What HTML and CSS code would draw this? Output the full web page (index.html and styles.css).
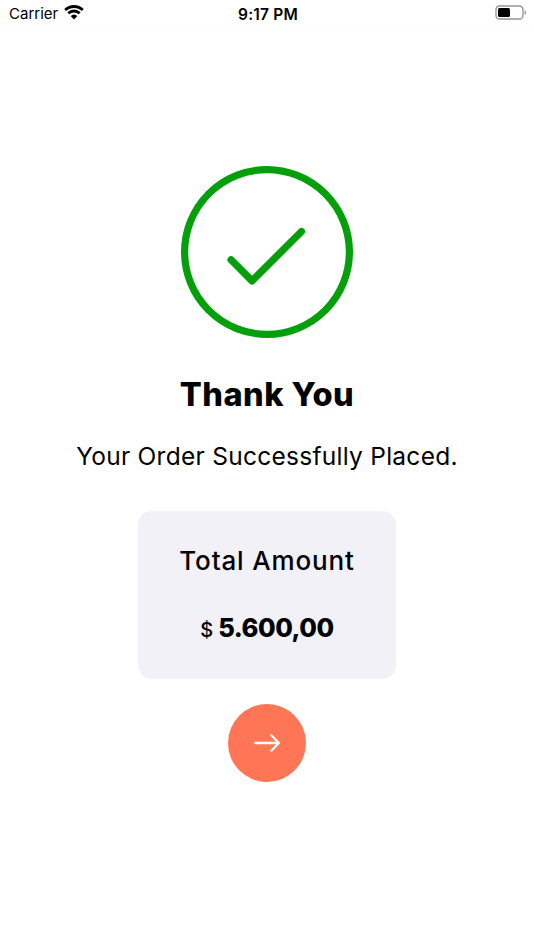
FILE: index.html
```
<!DOCTYPE html>
<html lang="en">
<head>
    <meta charset="UTF-8">
    <meta name="viewport" content="width=device-width, initial-scale=1.0">
    <title>Thank You</title>
    <link rel="stylesheet" href="styles.css">
</head>
<body>
    <header class="status-bar">
        <div class="carrier">
            <span>Carrier</span>
            <svg class="wifi" width="20" height="15" viewBox="0 0 20 15">
                <path d="M1.2 5.1a12.6 12.6 0 0 1 17.6 0M4.3 8.3a8.2 8.2 0 0 1 11.4 0" fill="none" stroke="#000" stroke-width="2.8"/>
                <path d="M6.7 11a4.8 4.8 0 0 1 6.6 0L10 14.4z"/>
            </svg>
        </div>
        <div class="time">9:17 PM</div>
        <svg class="battery" width="32" height="16" viewBox="0 0 32 16">
            <rect x="1" y="1" width="27" height="13" rx="3.6" fill="none" stroke="#969696" stroke-width="1.4"/>
            <rect x="3" y="3" width="12" height="9" rx="1.6"/>
            <path d="M29.6 5.2c2.2.9 2.2 3.7 0 4.6z" fill="#969696"/>
        </svg>
    </header>

    <main class="success">
        <svg class="check" width="172" height="172" viewBox="0 0 172 172" fill="none" stroke="#049f0b" stroke-width="7.2">
            <circle cx="86" cy="86" r="82.4"/>
            <path d="M50 93.7l21 21.2 49.5-49.4" stroke-linecap="round" stroke-linejoin="round"/>
        </svg>
        <h1>Thank You</h1>
        <p class="message">Your Order Successfully Placed.</p>
        <section class="total">
            <h2>Total Amount</h2>
            <p class="amount"><span class="currency">$</span><strong>5.600,00</strong></p>
        </section>
        <button class="next" type="button" aria-label="Continue">
            <svg width="28" height="20" viewBox="0 0 28 20" fill="none" stroke="#fff" stroke-width="2.3" stroke-linecap="round" stroke-linejoin="round">
                <path d="M2.2 10h23.6M18.3 2.3L25.8 10l-7.5 7.7"/>
            </svg>
        </button>
    </main>
</body>
</html>
```
FILE: styles.css
```
* {
    box-sizing: border-box;
}

body {
    margin: 0;
    height: 950px;
    background: #fff;
    color: #000;
    font-family: Inter, "Liberation Sans", sans-serif;
}

h1, h2, p {
    margin: 0;
    white-space: nowrap;
}

.status-bar {
    display: grid;
    grid-template-columns: 1fr auto 1fr;
    align-items: center;
    height: 26px;
    padding: 1px 7px 0 9px;
    border-bottom: 1px solid #fdfdfd;
    font-size: 15.5px;
}

.carrier {
    display: flex;
    align-items: center;
    gap: 6px;
    font-size: 15px;
    line-height: 20px;
}

.carrier span {
    padding-top: 2px;
}

.wifi {
    margin-bottom: 1px;
}

.time {
    padding-top: 2px;
    font-weight: 600;
    letter-spacing: 0.2px;
}

.battery {
    justify-self: end;
}

.success {
    display: flex;
    flex-direction: column;
    align-items: center;
    padding-top: 140px;
}

.check {
    display: block;
}

h1 {
    margin-top: 36px;
    font-size: 32.5px;
    line-height: 42px;
    font-weight: 800;
    letter-spacing: 0.5px;
}

.message {
    margin-top: 24px;
    font-size: 24.5px;
    line-height: 32px;
    letter-spacing: 0.27px;
}

.total {
    display: flex;
    flex-direction: column;
    align-items: center;
    width: 258px;
    height: 168px;
    margin-top: 39px;
    padding-top: 33px;
    border-radius: 14px;
    background: #f2f1f7;
}

h2 {
    font-size: 26px;
    line-height: 33px;
    font-weight: 500;
    letter-spacing: 0.85px;
}

.amount {
    display: flex;
    align-items: baseline;
    gap: 5px;
    margin-top: 35px;
    font-size: 25.5px;
    line-height: 32px;
}

.amount strong {
    font-weight: 800;
    letter-spacing: -0.45px;
}

.currency {
    font-size: 20px;
    font-weight: 500;
}

.next {
    display: flex;
    align-items: center;
    justify-content: center;
    width: 78px;
    height: 78px;
    margin-top: 25px;
    padding: 0;
    border: 0;
    border-radius: 50%;
    background: #ff7657;
}
```
